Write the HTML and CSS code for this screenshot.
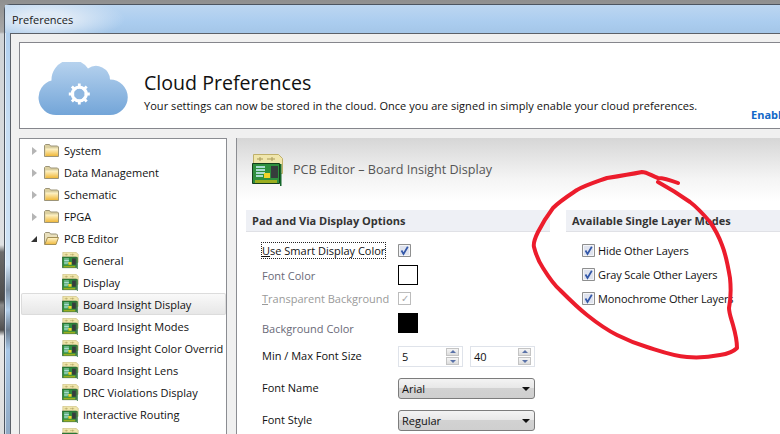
FILE: index.html
```html
<!DOCTYPE html>
<html lang="en">
<head>
<meta charset="utf-8">
<title>Preferences</title>
<link rel="stylesheet" href="styles.css">
</head>
<body>
<svg class="defs" width="0" height="0" aria-hidden="true">
  <defs>
    <linearGradient id="cloudGrad" x1="0" y1="0" x2="0" y2="1">
      <stop offset="0" stop-color="#b9d4ef"/><stop offset="1" stop-color="#73a5d8"/>
    </linearGradient>
    <linearGradient id="folderGrad" x1="0" y1="0" x2="0" y2="1">
      <stop offset="0" stop-color="#fff6cf"/><stop offset="1" stop-color="#f0b93c"/>
    </linearGradient>
    <symbol id="folder" viewBox="0 0 15 13">
      <path d="M.5 12.500V1.500L1.500.5h4l1 1.500h7l1 1v9.500z" fill="#dcd0a0" stroke="#9c9478"/>
      <path d="M1.500 4.500h12.500v7.500H1.500z" fill="url(#folderGrad)"/>
    </symbol>
    <symbol id="folder-open" viewBox="0 0 15 13">
      <path d="M.5 12.500V1.500L1.500.5h4l1 1.500h6l1 1v2" fill="#e9e0bd" stroke="#9c9478"/>
      <path d="M.8 12.500 3.500 5.500h11l-2.500 7z" fill="url(#folderGrad)" stroke="#a48f55"/>
    </symbol>
    <symbol id="pcb" viewBox="0 0 32 32">
      <path d="M1.500.5h25l4 4v15h-29z" fill="#f0e6ac" stroke="#bfb06a"/>
      <path d="M5 5h6M15 5h8M8 3v4M20 3v4" stroke="#a89a58" fill="none"/>
      <path d="M.5 9.500h27v20H.5z" fill="#2f8f3e" stroke="#143f1c"/>
      <path d="M3 26h22v3H3z" fill="#9aae20"/>
      <path d="M28 10h1.500v22H28z" fill="#14662a"/>
      <path d="M4 12h9v2H4zM4 15h9v2H4zM4 18h9v2H4zM4 21h7v2H4z" fill="#a8dcd0"/>
      <path d="M19 12h7v12h-7z" fill="#363c3c"/>
      <path d="M12 19h6v5h-6z" fill="#f1d42a"/>
    </symbol>
    <symbol id="check" viewBox="0 0 13 13">
      <path d="M.5.500h12v12H.500z" fill="#d5d9e6" stroke="#8e8f8f"/>
      <path d="M1.500 1.500h10v10h-10z" fill="#dfe3ee" stroke="#f4f5f8"/>
      <path d="M3.500 6.500 5.500 10 9.800 2.800" fill="none" stroke="#3257a8" stroke-width="1.700"/>
    </symbol>
  </defs>
</svg>

<div class="screen">
  <div class="window">
    <div class="titlebar">Preferences</div>
    <div class="client">
      <header class="cloud-card">
        <svg class="cloud" viewBox="0 0 90 53" width="90" height="53" aria-hidden="true">
          <path d="M18 53A17.500 17.500 0 0 1 13.500 18.600 20 20 0 0 1 50 6.500 14 14 0 0 1 72 17.500 17.750 17.750 0 0 1 72 53z" fill="url(#cloudGrad)"/>
          <circle cx="41.300" cy="32" r="7" fill="none" stroke="#fff" stroke-width="3.200"/>
          <path d="M41.300 21.500v21M30.800 32h21M33.900 24.600l14.800 14.800M48.700 24.600 33.900 39.400" stroke="#fff" stroke-width="2.800"/>
          <circle cx="41.300" cy="32" r="5.200" fill="#8fb7e0"/>
        </svg>
        <div class="cloud-text">
          <h1 class="cloud-title">Cloud Preferences</h1>
          <p class="cloud-sub">Your settings can now be stored in the cloud. Once you are signed in simply enable your cloud preferences.</p>
        </div>
        <a class="enable">Enable</a>
      </header>

      <div class="main">
        <nav class="tree">
          <div class="row"><span class="arrow"></span><svg class="ico-folder"><use href="#folder"/></svg><span>System</span></div>
          <div class="row"><span class="arrow"></span><svg class="ico-folder"><use href="#folder"/></svg><span>Data Management</span></div>
          <div class="row"><span class="arrow"></span><svg class="ico-folder"><use href="#folder"/></svg><span>Schematic</span></div>
          <div class="row"><span class="arrow"></span><svg class="ico-folder"><use href="#folder"/></svg><span>FPGA</span></div>
          <div class="row"><span class="arrow open"></span><svg class="ico-folder"><use href="#folder-open"/></svg><span>PCB Editor</span></div>
          <div class="row child"><svg class="ico-pcb"><use href="#pcb"/></svg><span>General</span></div>
          <div class="row child"><svg class="ico-pcb"><use href="#pcb"/></svg><span>Display</span></div>
          <div class="row child selected"><svg class="ico-pcb"><use href="#pcb"/></svg><span>Board Insight Display</span></div>
          <div class="row child"><svg class="ico-pcb"><use href="#pcb"/></svg><span>Board Insight Modes</span></div>
          <div class="row child"><svg class="ico-pcb"><use href="#pcb"/></svg><span>Board Insight Color Overrid</span></div>
          <div class="row child"><svg class="ico-pcb"><use href="#pcb"/></svg><span>Board Insight Lens</span></div>
          <div class="row child"><svg class="ico-pcb"><use href="#pcb"/></svg><span>DRC Violations Display</span></div>
          <div class="row child"><svg class="ico-pcb"><use href="#pcb"/></svg><span>Interactive Routing</span></div>
          <div class="row child last"><svg class="ico-pcb"><use href="#pcb"/></svg></div>
        </nav>

        <section class="panel">
          <div class="panel-head">
            <svg class="ico-pcb-big"><use href="#pcb"/></svg>
            <h2 class="panel-title">PCB Editor – Board Insight Display</h2>
          </div>
          <div class="columns">
            <div class="col-left">
              <h3 class="bar">Pad and Via Display Options</h3>
              <div class="form">
                <div class="field h22"><label class="lab"><span class="focus"><u>U</u>se Smart Display Color</span></label><svg class="box"><use href="#check"/></svg></div>
                <div class="field h20 g4"><label class="lab dim">Font Color</label><span class="swatch"></span></div>
                <div class="field h22 g2"><label class="lab faint"><u>T</u>ransparent Background</label><span class="box-off">✓</span></div>
                <div class="field h20 g4 low"><label class="lab dim">Background Color</label><span class="swatch black"></span></div>
                <div class="field h21 g13 raised"><label class="lab">Min / Max Font Size</label>
                  <span class="spin"><span class="val">5</span><span class="btns"><i class="up"></i><i class="down"></i></span></span>
                  <span class="spin"><span class="val">40</span><span class="btns"><i class="up"></i><i class="down"></i></span></span>
                </div>
                <div class="field h21 g11 raised"><label class="lab">Font Name</label><span class="select">Arial<i></i></span></div>
                <div class="field h21 g11 raised"><label class="lab">Font Style</label><span class="select">Regular<i></i></span></div>
              </div>
            </div>
            <div class="col-right">
              <h3 class="bar">Available Single Layer Modes</h3>
              <div class="modes">
                <div class="mode"><svg class="box"><use href="#check"/></svg><span>Hide Other Layers</span></div>
                <div class="mode"><svg class="box"><use href="#check"/></svg><span>Gray Scale Other Layers</span></div>
                <div class="mode"><svg class="box"><use href="#check"/></svg><span>Monochrome Other Layers</span></div>
              </div>
            </div>
          </div>
        </section>
      </div>
    </div>
  </div>

  <svg class="scribble" viewBox="0 0 780 434" width="780" height="434" aria-hidden="true">
    <path d="M678 183C670 180 664 178 658 178 652 176 647 172 642 172 632 174 620 176 607 178 596 182 586 185 577 190 568 196 560 201 553 208 547 216 542 224 538 232 535 238 533 243 534 247 536 255 539 262 543 268 548 276 553 284 560 290 569 299 578 308 587 315 597 323 607 330 617 335 627 340 637 344 647 347 660 351 673 356 687 357 699 358 710 357 720 355 727 354 733 352 737 348 737 340 735 332 733 325 731 318 729 313 729 308 731 298 731 288 730 278 728 266 726 255 722 245 719 237 715 229 710 222 704 215 698 208 690 202 680 195 669 188 658 182" fill="none" stroke="#ec1c2c" stroke-width="4" stroke-linecap="round" stroke-linejoin="round"/>
  </svg>
</div>
</body>
</html>
```

FILE: styles.css
```css
* { box-sizing: border-box; }
html, body { margin: 0; padding: 0; }
body { width: 780px; height: 434px; overflow: hidden; background: #b8b8b8; }
.defs { position: absolute; }
.screen {
  position: relative;
  width: 780px;
  height: 434px;
  overflow: hidden;
  padding: 4px 0 0 4px;
  background: linear-gradient(#8f8f8f 0, #a8a8a8 32px, #cfd3d6 34px, #dfe1e3 245px, #6b6b6b 252px, #4c4c4c 300px, #8a8a8a 305px, #4f4f4f 330px, #e8e8e8 336px, #dedede 434px);
  font-family: "Open Sans", "Noto Sans", sans-serif;
  font-size: 11px;
  color: #111;
}
.window {
  width: 840px;
  height: 440px;
  background: linear-gradient(#a9cbee, #c6ddf3 120px, #cfe3f6 260px, #7d8fa2 285px, #b4d0ec 305px, #68798c 325px, #a9c8e8 345px, #8fa8c2 434px);
  border: 1px solid #4d5560;
  border-right: 0;
  border-radius: 6px 0 0 0;
  padding-left: 5px;
  box-shadow: inset 1px 1px 0 rgba(255, 255, 255, .6);
}
.titlebar {
  height: 28px;
  margin-left: -5px;
  padding: 8px 0 0 7px;
  line-height: 14px;
  font-size: 11px;
  color: #1a1a1a;
  background: radial-gradient(ellipse 80px 22px at 40px 14px, #dfeaf6 30%, rgba(223, 234, 246, 0) 100%), linear-gradient(#bcd6f1, #abcdef 60%, #a4c6e8);
}
.client {
  height: 420px;
  background: #f0f0f0;
  border: 1px solid #5b6068;
  border-right: 0;
  padding: 8px 0 0 8px;
}
.cloud-card {
  display: flex;
  align-items: flex-start;
  height: 87px;
  background: #fff;
  border: 1px solid #85868c;
  border-right: 0;
  padding: 19px 0 0 18px;
}
.cloud { flex: none; }
.cloud-text { flex: none; width: 600px; margin-left: 16px; padding-top: 8px; }
.cloud-title { margin: 0; font-size: 19.600px; font-weight: 400; line-height: 26px; color: #111; }
.cloud-sub { margin: 2px 0 0; font-size: 11px; letter-spacing: .047px; line-height: 15px; white-space: nowrap; color: #111; }
.enable { flex: none; margin: 45px 0 0 7px; font-weight: 700; font-size: 11px; line-height: 15px; color: #1268c8; }

.main { display: flex; gap: 9px; margin-top: 9px; height: 320px; }
.tree {
  flex: none;
  width: 208px;
  height: 320px;
  overflow: hidden;
  background: #fff;
  border: 1px solid #8b8d92;
  padding: 0 0 0 1px;
}
.row {
  display: flex;
  align-items: center;
  height: 22px;
  padding-left: 10px;
  white-space: nowrap;
  overflow: hidden;
  border-radius: 2px;
}
.arrow {
  flex: none;
  width: 0;
  height: 0;
  margin: 1px 7px 0 1px;
  border-style: solid;
  border-width: 4.500px 0 4.500px 5px;
  border-color: transparent transparent transparent #b5b5b5;
}
.arrow.open {
  margin: 2px 7px 0 0;
  border-width: 0 0 6px 6px;
  border-color: transparent transparent #333 transparent;
}
.ico-folder { flex: none; width: 15px; height: 13px; margin-right: 5px; }
.row.child { padding-left: 41px; }
.ico-pcb { flex: none; width: 17px; height: 17px; margin-right: 4px; }
.row.selected {
  width: 205px;
  background: linear-gradient(#fafafa, #e6e6e6);
  box-shadow: inset 0 0 0 1px #dcdcdc;
}
.row.last { align-items: flex-start; padding-top: 3px; }

.panel {
  flex: none;
  width: 560px;
  height: 320px;
  border-left: 1px solid #8b8d92;
  background: linear-gradient(#d6d6d6, #f4f4f4 40px, #fff 64px);
}
.panel-head { display: flex; align-items: center; height: 72px; padding: 0 0 8px 15px; }
.ico-pcb-big { flex: none; width: 32px; height: 32px; margin-right: 9px; }
.panel-title { margin: 0 0 1px; font-size: 12.600px; font-weight: 400; color: #555; }
.columns { display: flex; gap: 16px; padding-left: 9px; }
.col-left { flex: none; width: 304px; }
.col-right { flex: none; width: 230px; }
.bar {
  margin: 0;
  height: 22px;
  line-height: 21px;
  padding-left: 6px;
  font-size: 11px;
  font-weight: 700;
  color: #333;
  background: #eef0f5;
  border-bottom: 1px solid #e0e1e6;
}
.form { padding: 7px 0 0 16px; }
.field { display: flex; align-items: center; }
.h22 { height: 22px; }
.h20 { height: 20px; }
.h21 { height: 21px; }
.g2 { margin-top: 2px; }
.g4 { margin-top: 4px; }
.g11 { margin-top: 11px; }
.g13 { margin-top: 13px; }
.lab { flex: none; width: 136px; white-space: nowrap; }
.dim { color: #6a6a78; }
.faint { color: #9a9a9a; }
.low .lab { align-self: flex-end; line-height: 11px; margin-bottom: -1px; }
.raised .lab { margin-bottom: 2px; }
.focus { outline: 1px dotted #222; outline-offset: 0; }
.box { flex: none; width: 13px; height: 13px; }
.box-off {
  flex: none;
  width: 13px;
  height: 13px;
  border: 1px solid #bcbcbc;
  font-size: 10px;
  line-height: 11px;
  text-align: center;
  color: #a8a8a8;
}
.swatch { flex: none; width: 20px; height: 20px; border: 1px solid #000; background: #fff; }
.swatch.black { background: #000; }
.spin {
  flex: none;
  display: flex;
  align-items: center;
  justify-content: space-between;
  width: 65px;
  height: 21px;
  margin-right: 7px;
  padding: 0 3px 0 3px;
  background: #fff;
  border: 1px solid #dfe3ea;
  font-size: 11px;
}
.btns { display: flex; flex-direction: column; gap: 1px; }
.btns i {
  position: relative;
  display: block;
  width: 13px;
  height: 8px;
  background: linear-gradient(#f5f5f5, #dcdcdc);
  border: 1px solid #c4c4c4;
}
.btns i::after {
  content: "";
  position: absolute;
  left: 3px;
  width: 0;
  height: 0;
  border-left: 3px solid transparent;
  border-right: 3px solid transparent;
}
.btns .up::after { top: 1px; border-bottom: 3px solid #5a72a8; }
.btns .down::after { top: 2px; border-top: 3px solid #5a72a8; }
.select {
  position: relative;
  flex: none;
  width: 137px;
  height: 21px;
  padding-left: 3px;
  line-height: 20px;
  border: 1px solid #7c7c7c;
  border-radius: 3px;
  background: linear-gradient(#f3f3f3, #e8e8e8 45%, #d2d2d2 50%, #cfcfcf);
}
.select i {
  position: absolute;
  right: 4px;
  top: 8px;
  width: 0;
  height: 0;
  border-left: 4px solid transparent;
  border-right: 4px solid transparent;
  border-top: 4px solid #111;
}
.modes { display: flex; flex-direction: column; gap: 10px; padding: 11px 0 0 16px; }
.mode { display: flex; align-items: center; gap: 3px; height: 14px; white-space: nowrap; letter-spacing: -.12px; }
.scribble { position: absolute; left: 0; top: 0; pointer-events: none; }
```
